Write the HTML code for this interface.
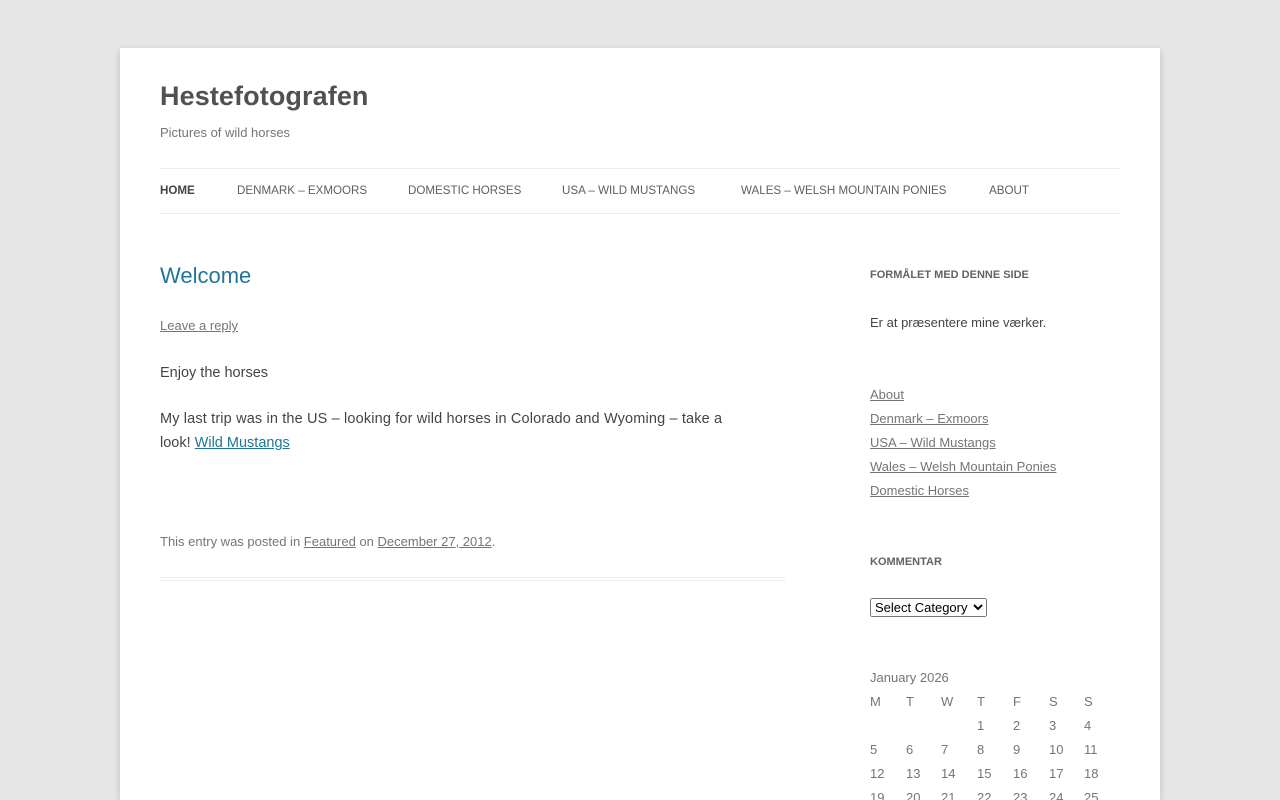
<!DOCTYPE html>
<html><head><meta charset="utf-8"><style>
*{margin:0;padding:0;box-sizing:border-box}
html,body{width:1280px;height:800px;overflow:hidden}
body{background:#e6e6e6;font-family:"Liberation Sans",sans-serif;color:#444;position:relative}
#page{position:absolute;left:120px;top:48px;width:1040px;height:752px;background:#fff;box-shadow:0 2px 6px rgba(100,100,100,.3)}
.a{position:absolute;white-space:nowrap}
h1{position:absolute;left:40px;top:33px;font-size:27px;font-weight:bold;color:#515151;letter-spacing:0.1px}
.tag{left:40px;top:77px;font-size:13px;color:#757575}
.nav{position:absolute;left:40px;top:120px;width:960px;height:46px;border-top:1px solid #ededed;border-bottom:1px solid #ededed}
.nav span{position:absolute;top:15px;font-size:11.6px;color:#5e5e5e;text-transform:uppercase}
.t{font-size:22px;color:#21759b;left:40px;top:215px}
.m{font-size:13px;color:#757575}
u{text-decoration:underline}
.p{font-size:14.5px;color:#444}
.wt{font-size:11px;font-weight:bold;color:#636363;text-transform:uppercase;left:750px}
.sl{font-size:13px;color:#757575;text-decoration:underline;left:750px}
.cal{position:absolute;left:750px;top:622px;font-size:13px;color:#757575}
.cal div{position:absolute;white-space:nowrap}
</style></head><body>
<div id="page">
<h1>Hestefotografen</h1>
<div class="a tag">Pictures of wild horses</div>
<div class="nav">
<span style="left:0;font-weight:bold;color:#444">Home</span>
<span style="left:77px">Denmark – Exmoors</span>
<span style="left:248px">Domestic Horses</span>
<span style="left:402px">USA – Wild Mustangs</span>
<span style="left:581px">Wales – Welsh Mountain Ponies</span>
<span style="left:829px">About</span>
</div>
<div class="a t">Welcome</div>
<div class="a m" style="left:40px;top:270px"><u>Leave a reply</u></div>
<div class="a p" style="left:40px;top:317px">Enjoy the horses</div>
<div class="a p" style="left:40px;top:363px;letter-spacing:0.15px">My last trip was in the US – looking for wild horses in Colorado and Wyoming – take a</div>
<div class="a p" style="left:40px;top:387px">look! <u style="color:#21759b">Wild Mustangs</u></div>
<div class="a m" style="left:40px;top:486px">This entry was posted in <u>Featured</u> on <u>December 27, 2012</u>.</div>
<div style="position:absolute;left:40px;top:529px;width:625px;height:4px;border-top:1px solid #ededed;border-bottom:1px solid #ededed"></div>
<div class="a wt" style="top:221px">Formålet med denne side</div>
<div class="a" style="left:750px;top:267px;font-size:13px;color:#444">Er at præsentere mine værker.</div>
<div class="a sl" style="top:339px">About</div>
<div class="a sl" style="top:363px">Denmark – Exmoors</div>
<div class="a sl" style="top:387px">USA – Wild Mustangs</div>
<div class="a sl" style="top:411px">Wales – Welsh Mountain Ponies</div>
<div class="a sl" style="top:435px">Domestic Horses</div>
<div class="a wt" style="top:508px">Kommentar</div>
<select style="position:absolute;left:750px;top:550px;width:117px;height:19px;font-size:13px"><option>Select Category</option></select>
<div class="cal">
<div style="left:0;top:0">January 2026</div>
<div style="left:0;top:24px">M</div><div style="left:36px;top:24px">T</div><div style="left:71px;top:24px">W</div><div style="left:107px;top:24px">T</div><div style="left:143px;top:24px">F</div><div style="left:179px;top:24px">S</div><div style="left:214px;top:24px">S</div>
<div style="left:107px;top:48px">1</div><div style="left:143px;top:48px">2</div><div style="left:179px;top:48px">3</div><div style="left:214px;top:48px">4</div>
<div style="left:0;top:72px">5</div><div style="left:36px;top:72px">6</div><div style="left:71px;top:72px">7</div><div style="left:107px;top:72px">8</div><div style="left:143px;top:72px">9</div><div style="left:179px;top:72px">10</div><div style="left:214px;top:72px">11</div>
<div style="left:0;top:96px">12</div><div style="left:36px;top:96px">13</div><div style="left:71px;top:96px">14</div><div style="left:107px;top:96px">15</div><div style="left:143px;top:96px">16</div><div style="left:179px;top:96px">17</div><div style="left:214px;top:96px">18</div>
<div style="left:0;top:120px">19</div><div style="left:36px;top:120px">20</div><div style="left:71px;top:120px">21</div><div style="left:107px;top:120px">22</div><div style="left:143px;top:120px">23</div><div style="left:179px;top:120px">24</div><div style="left:214px;top:120px">25</div>
</div>
</div>
</body></html>
